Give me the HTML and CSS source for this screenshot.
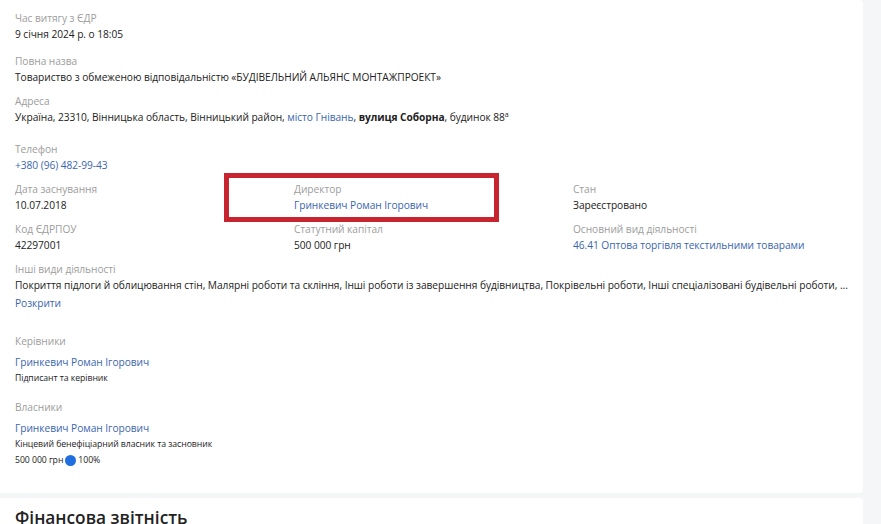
FILE: index.html
```html
<!DOCTYPE html>
<html lang="uk">
<head>
    <meta charset="UTF-8">
    <title>Компанія</title>
    <link rel="stylesheet" href="styles.css">
</head>
<body>
    <div class="card main">
        <div class="field first">
            <div class="label">Час витягу з ЄДР</div>
            <div class="value">9 січня 2024 р. о 18:05</div>
        </div>
        <div class="field">
            <div class="label">Повна назва</div>
            <div class="value">Товариство з обмеженою відповідальністю «БУДІВЕЛЬНИЙ АЛЬЯНС МОНТАЖПРОЕКТ»</div>
        </div>
        <div class="field address">
            <div class="label">Адреса</div>
            <div class="value">Україна, 23310, Вінницька область, Вінницький район, <a class="link" href="#">місто Гнівань</a>, <b>вулиця Соборна</b>, будинок 88<sup>а</sup></div>
        </div>
        <div class="field">
            <div class="label">Телефон</div>
            <div class="value"><a class="link" href="#">+380 (96) 482-99-43</a></div>
        </div>

        <div class="grid">
            <div class="field">
                <div class="label">Дата заснування</div>
                <div class="value">10.07.2018</div>
            </div>
            <div class="field">
                <div class="label">Директор</div>
                <div class="value"><a class="link" href="#">Гринкевич Роман Ігорович</a></div>
            </div>
            <div class="field">
                <div class="label">Стан</div>
                <div class="value">Зареєстровано</div>
            </div>
            <div class="field">
                <div class="label">Код ЄДРПОУ</div>
                <div class="value">42297001</div>
            </div>
            <div class="field">
                <div class="label">Статутний капітал</div>
                <div class="value">500 000 грн</div>
            </div>
            <div class="field">
                <div class="label">Основний вид діяльності</div>
                <div class="value"><a class="link" href="#">46.41 Оптова торгівля текстильними товарами</a></div>
            </div>
        </div>

        <div class="field">
            <div class="label">Інші види діяльності</div>
            <div class="value clip">Покриття підлоги й облицювання стін, Малярні роботи та скління, Інші роботи із завершення будівництва, Покрівельні роботи, Інші спеціалізовані будівельні роботи, ...</div>
            <div class="value more"><a class="link" href="#">Розкрити</a></div>
        </div>

        <div class="people">
            <div class="label">Керівники</div>
            <div class="person">
                <a class="link" href="#">Гринкевич Роман Ігорович</a>
                <div class="role">Підписант та керівник</div>
            </div>
        </div>

        <div class="people owners">
            <div class="label">Власники</div>
            <div class="person">
                <a class="link" href="#">Гринкевич Роман Ігорович</a>
                <div class="role">Кінцевий бенефіціарний власник та засновник</div>
                <div class="role share">500 000 грн <span class="dot"></span> 100%</div>
            </div>
        </div>

        <div class="highlight"></div>
    </div>

    <div class="card">
        <h2>Фінансова звітність</h2>
    </div>
</body>
</html>
```
FILE: styles.css
```css
html, body {
    margin: 0;
    padding: 0;
    background: #f5f6f8;
    font-family: "Open Sans", "Noto Sans", Arial, sans-serif;
    font-size: 10.2px;
    letter-spacing: -0.05px;
    color: #222;
}

.card {
    background: #fff;
    width: 848px;
    padding: 0 0 0 15px;
    border-radius: 0 4px 4px 0;
}

.card.main {
    position: relative;
    padding-top: 10px;
    padding-bottom: 24px;
    margin-bottom: 5px;
}

.field {
    margin-top: 8px;
    line-height: 16px;
}

.field.first {
    margin-top: 0;
    margin-bottom: 11px;
}

.field.address {
    margin-bottom: 16px;
}

.label {
    color: #9d9d9d;
    line-height: 16px;
}

.value {
    line-height: 16px;
}

.value.clip {
    white-space: nowrap;
    overflow: hidden;
    padding-right: 20px;
}

.value.more {
    margin-top: 2px;
    line-height: 17px;
}

.value sup {
    font-size: 7px;
    line-height: 0;
    vertical-align: 4px;
}

.link {
    color: #3a66b0;
    text-decoration: none;
}

.grid {
    display: grid;
    grid-template-columns: 279px 279px auto;
}

.people {
    margin-top: 21px;
}

.people.owners {
    margin-top: 13px;
}

.people .label {
    margin-bottom: 5px;
}

.person {
    line-height: 16px;
}

.role {
    font-size: 8.7px;
    line-height: 16px;
}

.role.share {
    display: flex;
    align-items: center;
    gap: 2px;
    line-height: 17px;
}

.dot {
    display: inline-block;
    width: 11px;
    height: 11px;
    border-radius: 50%;
    background: #1f6fe0;
}

.highlight {
    position: absolute;
    left: 224px;
    top: 173px;
    width: 265px;
    height: 39px;
    border: 5px solid #c8242f;
}

.card h2 {
    margin: 0;
    padding-top: 6px;
    font-size: 17.3px;
    font-weight: 600;
    letter-spacing: 0;
    line-height: 28px;
}
```
